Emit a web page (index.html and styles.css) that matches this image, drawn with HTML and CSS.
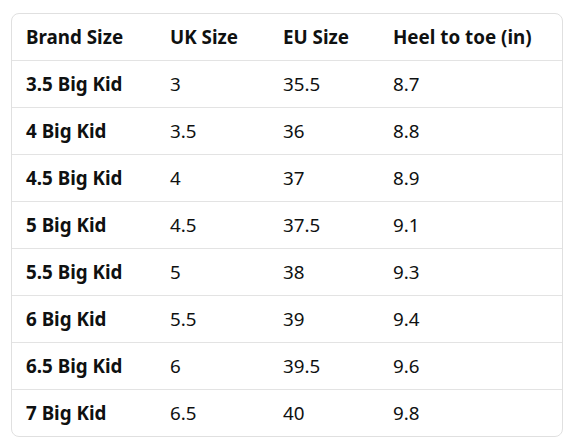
FILE: index.html
```html
<!DOCTYPE html>
<html>
<head>
<meta charset="utf-8">
<link rel="stylesheet" href="styles.css">
</head>
<body>
<div class="card">
<table class="sizes">
<colgroup><col class="c1"><col class="c2"><col class="c3"><col class="c4"></colgroup>
<thead>
<tr><th>Brand Size</th><th>UK Size</th><th>EU Size</th><th>Heel to toe (in)</th></tr>
</thead>
<tbody>
<tr><th>3.5 Big Kid</th><td>3</td><td>35.5</td><td>8.7</td></tr>
<tr><th>4 Big Kid</th><td>3.5</td><td>36</td><td>8.8</td></tr>
<tr><th>4.5 Big Kid</th><td>4</td><td>37</td><td>8.9</td></tr>
<tr><th>5 Big Kid</th><td>4.5</td><td>37.5</td><td>9.1</td></tr>
<tr><th>5.5 Big Kid</th><td>5</td><td>38</td><td>9.3</td></tr>
<tr><th>6 Big Kid</th><td>5.5</td><td>39</td><td>9.4</td></tr>
<tr><th>6.5 Big Kid</th><td>6</td><td>39.5</td><td>9.6</td></tr>
<tr><th>7 Big Kid</th><td>6.5</td><td>40</td><td>9.8</td></tr>
</tbody>
</table>
</div>
</body>
</html>
```
FILE: styles.css
```css
html, body { margin: 0; padding: 0; background: #fff; }
body { padding: 13px 0 0 11px; font-family: "Noto Sans", "DejaVu Sans", sans-serif; color: #0f1111; }
.card {
  width: 550px;
  border: 1px solid #e0e0e0;
  border-radius: 8px;
  overflow: hidden;
}
.sizes { border-collapse: collapse; table-layout: fixed; width: 550px; }
.c1 { width: 144px; } .c2 { width: 113px; } .c3 { width: 110px; } .c4 { width: 183px; }
.sizes th, .sizes td {
  height: 46px;
  padding: 0 0 0 14px;
  text-align: left;
  font-size: 18.8px;
  vertical-align: middle;
  white-space: nowrap;
}
.sizes th { font-weight: 700; }
.sizes td { font-weight: 400; }
.sizes tr + tr th, .sizes tr + tr td, .sizes tbody tr:first-child th, .sizes tbody tr:first-child td { border-top: 1px solid #e3e3e3; }
```
